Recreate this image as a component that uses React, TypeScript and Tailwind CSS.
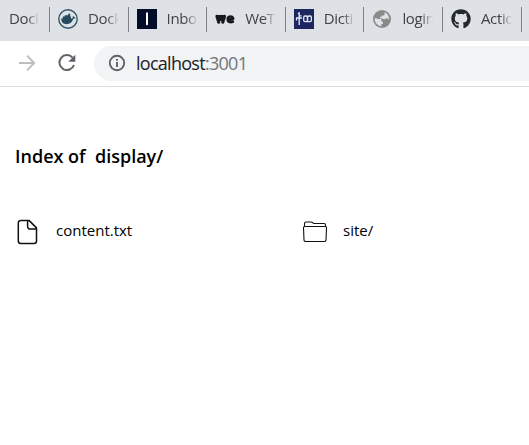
import type { ReactNode } from 'react';
import { FaGithub } from 'react-icons/fa';

function DockerIcon() {
  return (
    <svg viewBox="0 0 20 20" className="size-5">
      <circle cx="10" cy="10" r="9.2" fill="#dce3e8" stroke="#395466" strokeWidth="1.4" />
      <path d="M3.2 9.5h1.6V7.6h2V6.2h3.4V4.8h2v2.8h.8v1.9c1 .2 1.6-.1 1.8-.6-.4-.8-.2-1.5.3-2 .6.4.9.8.9 1.4.6-.1 1 0 1.4.4-.4.8-1.1 1.1-2 1.1-1.2 3.6-3.4 5.4-6.6 5.4-3.4 0-5.5-1.9-5.6-5.7z" fill="#26495e" />
    </svg>
  );
}

function InboxIcon() {
  return (
    <svg viewBox="0 0 20 20" className="size-5">
      <path d="M0 0h20v20H0z" fill="#020d29" />
      <path d="M10 4.3v11" stroke="#fff" strokeWidth="2" strokeLinecap="round" />
    </svg>
  );
}

function WeIcon() {
  return (
    <svg viewBox="0 0 20 20" className="size-5" fill="none" stroke="#17191c">
      <path d="M2 7.3 3.7 13.1M5.9 7.3v3.2M9.4 7.3 7.8 13.1" strokeWidth="3.2" strokeLinecap="round" />
      <path d="M2 7.1h7.2v2.5H3z" strokeWidth="2.4" strokeLinejoin="round" />
      <path d="M13.3 11.1 18.2 9.7C17.8 8.2 16.8 7.5 15.6 7.5c-1.8 0-2.9 1.1-2.9 2.9 0 2.3 2.2 3.3 5.2 2.3" strokeWidth="2.6" strokeLinecap="round" strokeLinejoin="round" />
    </svg>
  );
}

function DictionaryIcon() {
  return (
    <svg viewBox="0 0 20 20" className="size-5" fill="none" stroke="#e5e8f3" strokeWidth="1.3">
      <path d="M0 0h20v20H0z" fill="#1c2760" stroke="none" />
      <path d="M3.8 4.6 5.2 4v12M2 9h6M2.5 9v2.5M5.2 6.8h2.4" />
      <rect x="9.7" y="7" width="3.8" height="5.6" rx="1.4" />
      <path d="M13.5 12.6V8.4Q13.5 7 14.9 7h1.1q1.4 0 1.4 1.4v2.8q0 1.4-1.4 1.4z" />
    </svg>
  );
}

function GlobeIcon() {
  return (
    <svg viewBox="0 0 20 20" className="size-5">
      <circle cx="10" cy="10" r="9" fill="#8a8a8a" />
      <path d="M2.8 9 6.8 10h2.4v2l1.8 1.1v1.7l-1.7.4v2.1C5.2 16.7 2.3 13.2 2.8 9zM12.5 3.2c3 1 4.8 3.8 4.6 7.5l-1.5-1.2h-2l-1.3 1-1.8-1.1H8.2V7.8h1.5V6.5h1.7c1 0 1.4-1 1.1-3.3z" fill="#dee1e6" />
    </svg>
  );
}

const tabs: { label: string; icon: ReactNode }[] = [
  { label: 'Dock', icon: <DockerIcon /> },
  { label: 'Inbo', icon: <InboxIcon /> },
  { label: 'WeT', icon: <WeIcon /> },
  { label: 'Dicti', icon: <DictionaryIcon /> },
  { label: 'login', icon: <GlobeIcon /> },
  { label: 'Actio', icon: <FaGithub className="size-5 text-[#24292e]" /> },
];

const fade =
  'overflow-hidden whitespace-nowrap text-[15px] leading-5 tracking-[-0.35px] text-[#3f4348] [mask-image:linear-gradient(to_right,black_60%,transparent)]';

function TabStrip() {
  return (
    <div className="flex h-[41px] items-start overflow-hidden bg-[#dee1e6] pt-[7px]">
      <div className="flex h-[25px] w-[50px] shrink-0 items-start border-r border-[#7d8085] pl-[9px] pt-px">
        <div className={`${fade} w-[30px]`}>Dock</div>
      </div>
      {tabs.map((tab) => (
        <div
          key={tab.label}
          className="flex h-[25px] w-[78.6px] shrink-0 items-start border-r border-[#7d8085] pl-2 pt-px"
        >
          <div className="mt-px size-5 shrink-0">{tab.icon}</div>
          <div className={`${fade} ml-[10px] w-[31px]`}>{tab.label}</div>
        </div>
      ))}
    </div>
  );
}

function Toolbar() {
  return (
    <div className="flex h-[46px] items-center border-b border-[#dadce0] bg-white pb-px pl-[18px]">
      <svg viewBox="0 0 18 18" className="size-[18px]" fill="none" stroke="#bcbec1" strokeWidth="1.9">
        <path d="M1 9h15M9 1.7 16.2 9 9 16.3" />
      </svg>
      <svg viewBox="0 0 20 20" className="ml-[21px] size-5" fill="none">
        <path d="M15.6 4.6A7.5 7.5 0 1 0 17 12" stroke="#5f6368" strokeWidth="2" />
        <path d="M18.3 1.8v7h-7z" fill="#5f6368" />
      </svg>
      <div className="ml-[17px] flex h-[35px] flex-1 items-center rounded-l-full bg-[#f1f3f4] pl-[14px]">
        <svg viewBox="0 0 18 18" className="size-[18px]" fill="none" stroke="#5f6368" strokeWidth="1.9">
          <circle cx="9" cy="9" r="7.2" />
          <path d="M9 8v5M9 5v1.8" />
        </svg>
        <div className="ml-[10px] text-[18px] leading-6 tracking-[-0.72px] text-[#202124]">
          localhost<span className="text-[#72767b]">:3001</span>
        </div>
      </div>
    </div>
  );
}

export default function App() {
  return (
    <div className="h-[445px] w-[529px] overflow-hidden bg-white font-['Open_Sans','Noto_Sans',sans-serif]">
      <TabStrip />
      <Toolbar />
      <main className="px-[15px] pt-[57px] text-black">
        <h1 className="h-6 whitespace-pre text-[18px] font-semibold leading-6">Index of  display/</h1>
        <div className="mt-[50px] grid grid-cols-[287px_1fr]">
          <div className="flex h-7 items-center pl-[2px]">
            <svg viewBox="0 0 22 26" className="h-[26px] w-[22px]" fill="none" stroke="#111" strokeWidth="1.5" strokeLinejoin="round">
              <path d="M3.8 1.4H12l7.5 7.5v13.2a2.5 2.5 0 0 1-2.5 2.5H3.8a2.5 2.5 0 0 1-2.5-2.5V3.9a2.5 2.5 0 0 1 2.5-2.5zM10.6 1.4v6.2a2.5 2.5 0 0 0 2.5 2.5h6.4" />
            </svg>
            <span className="ml-[17px] pb-1 text-[15px] leading-5">content.txt</span>
          </div>
          <div className="flex h-7 items-center">
            <svg viewBox="0 0 26 24" className="h-6 w-[26px]" fill="none" stroke="#111" strokeWidth="1.1" strokeLinejoin="round">
              <path d="M2.5 6.5V3.5c0-1 .6-1.5 1.5-1.5h5.5L12 3.5h10c1 0 1.5.5 1.5 1.5v1.5" />
              <path d="M3 6.5h20c1.2 0 1.6.7 1.5 1.6l-.5 12c-.1 1-.7 1.4-1.7 1.4H3.7c-1 0-1.6-.4-1.7-1.4l-.5-12C1.4 7.2 1.8 6.5 3 6.5z" />
            </svg>
            <span className="ml-[15px] pb-1 text-[15px] leading-5">site/</span>
          </div>
        </div>
      </main>
    </div>
  );
}
